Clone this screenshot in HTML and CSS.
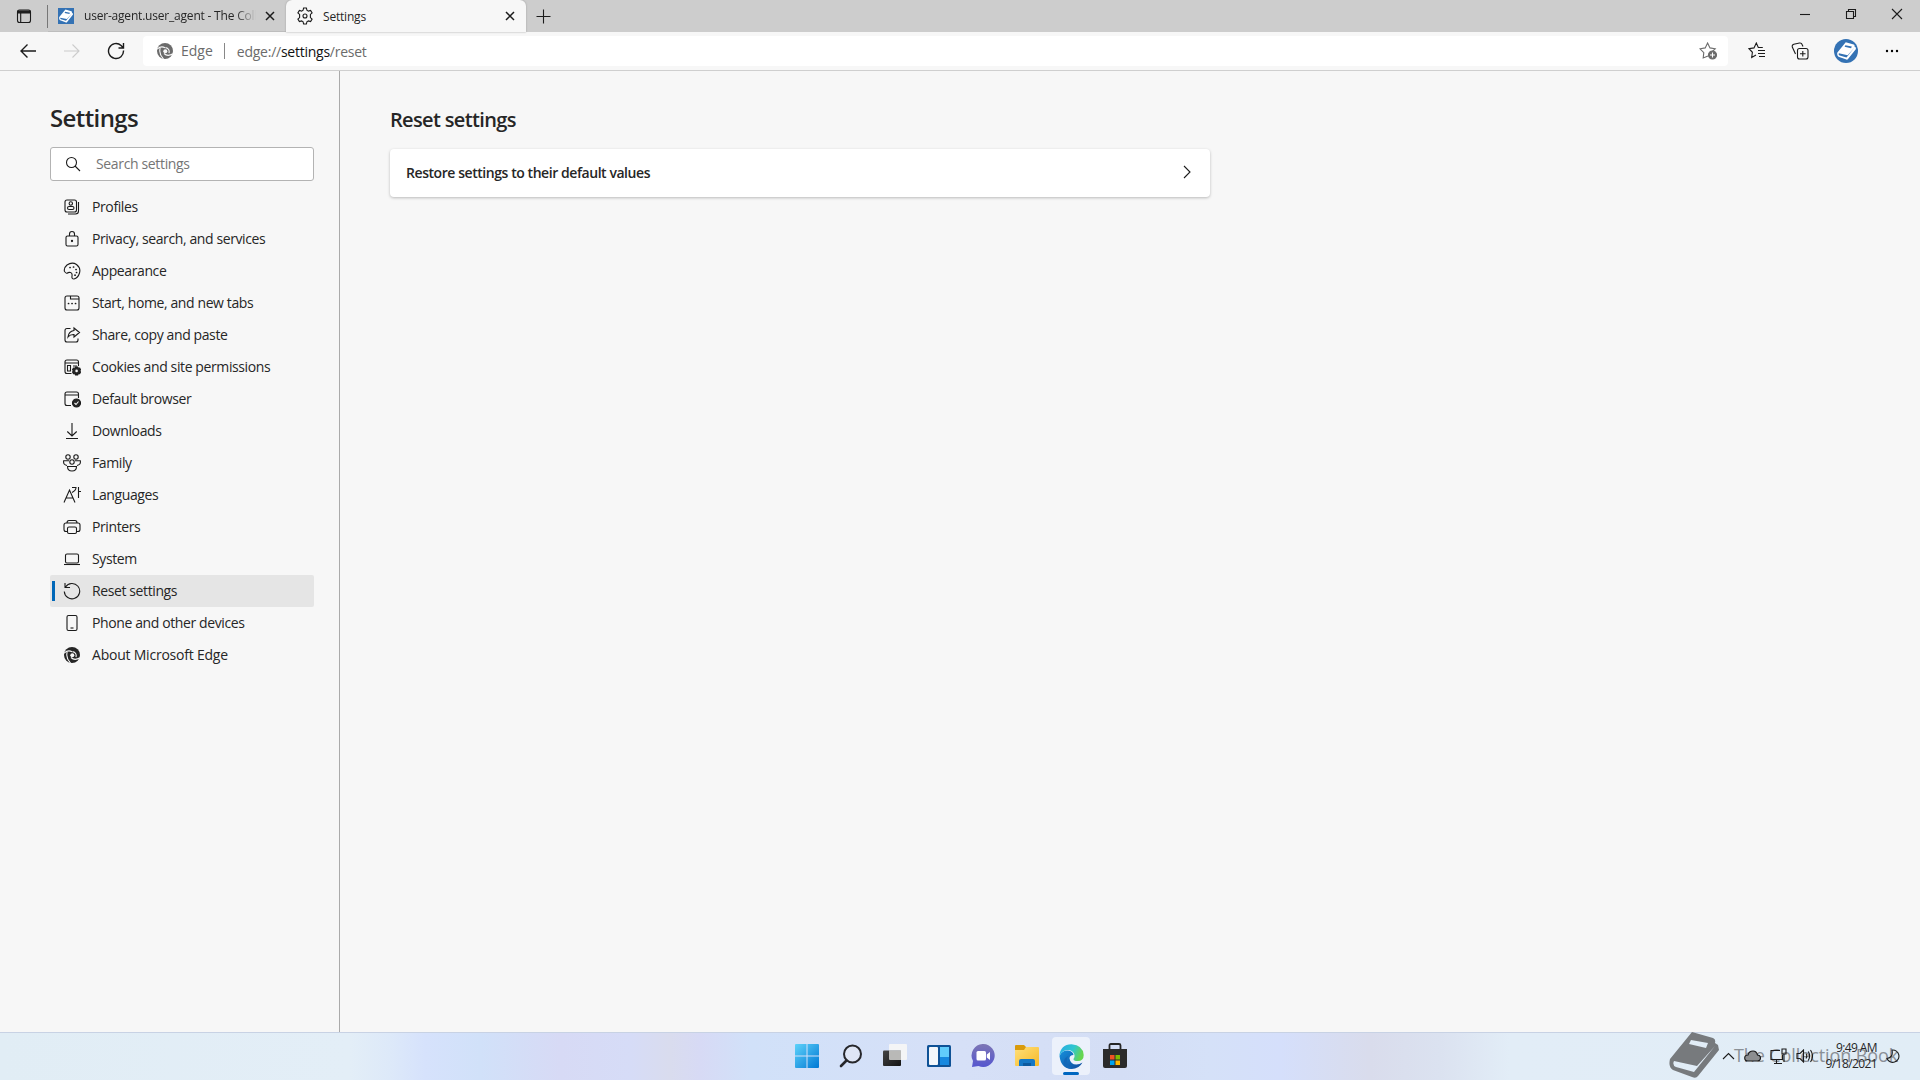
FILE: index.html
```html
<!DOCTYPE html>
<html lang="en">
<head>
    <meta charset="UTF-8">
    <title>Settings</title>
    <link rel="stylesheet" href="styles.css">
</head>
<body>

<!-- shared symbols -->
<svg class="symbols" width="0" height="0">
    <symbol id="book" viewBox="0 0 50 46">
        <path fill-rule="evenodd" d="M23 0 44 6Q47 7 46 11L49 13 50 18 29 44Q27 47 23 45L4 38Q-1 35 1 27ZM22 8 20 12 37 16 39 11ZM5 29Q3 33 7 35L25 40 46 14 28 34Z"/>
    </symbol>
    <symbol id="swirl" viewBox="0 0 16 16">
        <circle cx="8" cy="8" r="8"/>
        <path class="swirl-cut" d="M0 6.200Q4 2.500 8 4.800M3.200 5.200Q1.500 10.500 6.500 16M8.500 4.600Q13 5.500 12 10.200M16 10.800Q10.500 14 7 10.500"/>
        <circle class="swirl-hole" cx="8.300" cy="8.200" r="2"/>
    </symbol>
</svg>

<header class="tabbar">
    <div class="tab-actions">
        <svg class="icon" width="16" height="16" viewBox="0 0 16 16"><rect x="1.500" y="2" width="13" height="12.500" rx="2"/><path class="solid" d="M2 3h12v2H2z"/><path d="M4.700 5v9"/></svg>
    </div>
    <div class="tab">
        <span class="favicon"><svg width="14" height="14"><use href="#book"/></svg></span>
        <span class="tab-title faded">user-agent.user_agent - The Coll</span>
        <svg class="icon close" width="10" height="10" viewBox="0 0 10 10"><path d="M1 1l8 8M9 1l-8 8"/></svg>
    </div>
    <div class="tab active">
        <svg class="icon gear" width="18" height="18" viewBox="0 0 18 18"><path d="M7.600 1h2.800l.5 2.200 1.500.9 2.200-.7 1.500 2.500-1.700 1.500v3.200l1.700 1.500-1.500 2.500-2.200-.7-1.500.9-.5 2.200H7.600l-.5-2.200-1.500-.9-2.200.7-1.500-2.500 1.700-1.500V7.400L1.900 5.900l1.500-2.500 2.200.7 1.500-.9z"/><circle cx="9" cy="9" r="2"/></svg>
        <span class="tab-title">Settings</span>
        <svg class="icon close" width="10" height="10" viewBox="0 0 10 10"><path d="M1 1l8 8M9 1l-8 8"/></svg>
    </div>
    <svg class="icon new-tab" width="15" height="15" viewBox="0 0 15 15"><path d="M7.500.5v14M.5 7.500h14"/></svg>
    <div class="window-buttons">
        <svg class="icon" width="12" height="12" viewBox="0 0 12 12"><path d="M1 6.500h10"/></svg>
        <svg class="icon" width="12" height="12" viewBox="0 0 12 12"><path d="M1.500 3.500h7v7h-7zM3.500 3V1.500h7v7H9"/></svg>
        <svg class="icon" width="12" height="12" viewBox="0 0 12 12"><path d="M1 1l10 10M11 1L1 11"/></svg>
    </div>
</header>

<nav class="toolbar">
    <svg class="icon back" width="18" height="16" viewBox="0 0 18 16"><path d="M17 8H2M8.500 1.500L2 8l6.500 6.500"/></svg>
    <svg class="icon forward" width="18" height="16" viewBox="0 0 18 16"><path d="M1 8h15M9.500 1.500L16 8l-6.500 6.500"/></svg>
    <svg class="icon reload" width="18" height="18" viewBox="0 0 18 18"><path d="M16.500 8.500a7.500 7.500 0 1 1-2.400-5L16 5.500M16.500 1v5h-5"/></svg>
    <div class="address">
        <svg class="swirl" width="16" height="16"><use href="#swirl"/></svg>
        <span class="site">Edge</span>
        <span class="url">edge://<b>settings</b>/reset</span>
        <svg class="icon add-star" width="19" height="18" viewBox="0 0 19 18"><path d="M9 14l-4.800 2 .6-5.400L1 6.800l5.200-.9L8.600 1 11 5.900l5.200.9-2.600 2.400"/><circle cx="13.500" cy="13" r="4" class="solid"/><path class="plus" d="M13.500 10.500v5M11 13h5"/></svg>
    </div>
    <div class="tools">
        <svg class="icon" width="18" height="18" viewBox="0 0 18 18"><path d="M8 13l-4.300 2.500.7-5.200L1 6.700l5-.8L8.300 1l2 4.500h4.500M10 8.500h7M10 11.500h7M11 14.500h6"/></svg>
        <svg class="icon" width="18" height="18" viewBox="0 0 18 18"><rect x="6.500" y="6.500" width="10.500" height="10.500" rx="2"/><path d="M11.800 9v5.600M9 11.800h5.600M4.500 12L1.300 5Q.8 3 2.800 2.200L8.500 1q2-.3 2.600 1.500L12 4.500"/></svg>
        <span class="avatar"><svg width="19" height="18"><use href="#book"/></svg></span>
        <svg class="dots" width="14" height="4" viewBox="0 0 14 4"><circle cx="2" cy="2" r="1.200"/><circle cx="7" cy="2" r="1.200"/><circle cx="12" cy="2" r="1.200"/></svg>
    </div>
</nav>

<main>
    <aside>
        <h1>Settings</h1>
        <div class="search">
            <svg class="icon" width="16" height="16" viewBox="0 0 16 16"><circle cx="6.500" cy="6.500" r="5"/><path d="M10 10l5 5"/></svg>
            <span>Search settings</span>
        </div>
        <ul class="menu">
            <li><svg class="icon" width="18" height="18" viewBox="0 0 18 18"><rect x="2" y="2" width="11.500" height="12" rx="2"/><circle cx="7.800" cy="5.500" r="1.700"/><rect x="4.500" y="8.500" width="6.500" height="3" rx="1.500"/><path d="M15.500 4v9q0 3-3 3H5"/></svg><span>Profiles</span></li>
            <li><svg class="icon" width="18" height="18" viewBox="0 0 18 18"><rect x="3" y="6" width="12" height="10" rx="1.500"/><path d="M6.500 6V4q0-2.500 2.500-2.500T11.500 4v2"/><circle cx="9" cy="11" r=".6"/></svg><span>Privacy, search, and services</span></li>
            <li><svg class="icon" width="18" height="18" viewBox="0 0 18 18"><path d="M1.500 9.500Q.5 6 4 3q5-3.500 9.500-.5Q18 6 16.500 11T11 17q-2.500 0-2-3t-1.500-3.500-3 .5-3-1.500z"/><path class="dotted" d="M7 5.500h.1M10.500 5h.1M13 7.500h.1M13.500 10.500h.1M12 13.200h.1"/></svg><span>Appearance</span></li>
            <li><svg class="icon" width="18" height="18" viewBox="0 0 18 18"><rect x="2" y="2" width="14" height="14" rx="2"/><path d="M7.500 2v3H16"/><path class="dotted" d="M5.500 9.500h.1M9 9.500h.1M12.500 9.500h.1"/></svg><span>Start, home, and new tabs</span></li>
            <li><svg class="icon" width="18" height="18" viewBox="0 0 18 18"><path d="M7.500 2.500H4q-2 0-2 2V14q0 2 2 2h9q2 0 2-2v-1.500M11 2l5.500 4.500L11 11V8.500q-4-.2-6 2.500.5-5.500 6-6.500z"/></svg><span>Share, copy and paste</span></li>
            <li><svg class="icon" width="18" height="18" viewBox="0 0 18 18"><path d="M8.500 15.500H4q-2 0-2-2V4q0-2 2-2h9.500q2 0 2 2v4M2 5h13.500M4.500 7.500h3v5.500h-3zM10 8h4"/><path class="solid" d="M12.500 9h2.200l.5 1.200 1.500-.2.800 1.700-.8 1.200.8 1.200-.8 1.600-1.500-.1-.5 1.300h-2.200l-.6-1.300-1.500.1-.8-1.600.8-1.200-.8-1.200.8-1.700 1.500.2z"/><circle class="hole" cx="13.600" cy="12.900" r="1.300"/></svg><span>Cookies and site permissions</span></li>
            <li><svg class="icon" width="18" height="18" viewBox="0 0 18 18"><path d="M8 15.500H4q-2 0-2-2V4q0-2 2-2h9.500q2 0 2 2v4M2 5h13.500"/><circle class="solid" cx="13.500" cy="13" r="4"/><path class="cut" d="M11.500 13l1.500 1.500 2.500-3"/></svg><span>Default browser</span></li>
            <li><svg class="icon" width="18" height="18" viewBox="0 0 18 18"><path d="M9 1v13M4.300 9.500L9 14l4.700-4.500M3 16.500h12"/></svg><span>Downloads</span></li>
            <li><svg class="icon" width="18" height="18" viewBox="0 0 18 18"><circle cx="5" cy="3" r="2.200"/><circle cx="13" cy="3" r="2.200"/><circle cx="9" cy="8" r="2.200"/><path d="M6 6.700H.7Q0 11 4 11.500M12 6.700h5.300Q18 11 14 11.500M4.500 12.500h9Q13.500 17 9 17t-4.500-4.500z"/></svg><span>Family</span></li>
            <li><svg class="icon" width="18" height="18" viewBox="0 0 18 18"><path d="M1 16.500L6.500 4 12 16.500M3 12h7M9 1.500h4q0 3-4 5M15.500 1v11M15.500 5.500H18"/></svg><span>Languages</span></li>
            <li><svg class="icon" width="18" height="18" viewBox="0 0 18 18"><path d="M4.500 13.500H3q-2 0-2-2V7q0-2 2-2h12q2 0 2 2v4.500q0 2-2 2h-1.500M4 5q0-2.500 2-2.500h6q2 0 2 2.500"/><rect x="4.500" y="9" width="9" height="6.500" rx="1.500"/></svg><span>Printers</span></li>
            <li><svg class="icon" width="18" height="18" viewBox="0 0 18 18"><rect x="2.500" y="4" width="13" height="9" rx="1.500"/><path d="M1 14.500h16"/></svg><span>System</span></li>
            <li class="selected"><svg class="icon" width="18" height="18" viewBox="0 0 18 18"><path d="M2.500 5a7.700 7.700 0 1 1-1.200 4.500M2 1v4.500h5"/></svg><span>Reset settings</span></li>
            <li><svg class="icon" width="18" height="18" viewBox="0 0 18 18"><rect x="4" y="1.500" width="10" height="15" rx="1.500"/><path d="M7.500 14h3"/></svg><span>Phone and other devices</span></li>
            <li><svg class="swirl" width="16" height="16"><use href="#swirl"/></svg><span class="wide">About Microsoft Edge</span></li>
        </ul>
    </aside>
    <section>
        <h2>Reset settings</h2>
        <div class="card">
            <span>Restore settings to their default values</span>
            <svg class="icon" width="8" height="14" viewBox="0 0 8 14"><path d="M1 1l6 6-6 6"/></svg>
        </div>
    </section>
</main>

<footer class="taskbar">
    <div class="apps">
        <svg width="24" height="24" viewBox="0 0 24 24">
            <defs><linearGradient id="win" x2="1" y2="1" gradientUnits="userSpaceOnUse" x1="0" y1="0" gradientTransform="scale(24)"><stop stop-color="#5ed2fa"/><stop offset="1" stop-color="#0078d4"/></linearGradient></defs>
            <path fill="url(#win)" d="M1 0h10.500v11.500H0V1Q0 0 1 0zM12.500 0H23Q24 0 24 1v10.500H12.500zM0 12.500h11.500V24H1Q0 24 0 23zM12.500 12.500H24V23q0 1-1 1H12.500z"/>
        </svg>
        <svg width="24" height="24" viewBox="0 0 24 24"><circle cx="13.500" cy="10" r="8.500" fill="#dfe6f5" stroke="#26272b" stroke-width="2"/><path d="M7.500 16.500L2 22" stroke="#26272b" stroke-width="2.600" stroke-linecap="round"/></svg>
        <svg width="24" height="24" viewBox="0 0 24 24">
            <defs><linearGradient id="view" x2="1" y2="1"><stop stop-color="#444"/><stop offset="1" stop-color="#141414"/></linearGradient></defs>
            <rect y="6.500" width="18" height="15.500" rx="1" fill="url(#view)"/><path fill="#f4f5f6" d="M6 1q0-1 1-1h16q1 0 1 1v14q0 1-1 1h-5V6.500H6z"/><path fill="#b9b9b7" d="M6 6.500h12V16H7q-1 0-1-1z"/>
        </svg>
        <svg width="24" height="24" viewBox="0 0 24 24"><rect x="0" y="1" width="24" height="22" rx="1.500" fill="#0f5296"/><rect x="2" y="3" width="9" height="18" rx="1" fill="#f3f7fb"/><path fill="#61ccfb" d="M13 3h9v10h-9z"/><path fill="#1688df" d="M13 13h9v8h-9z"/></svg>
        <svg width="24" height="24" viewBox="0 0 24 24">
            <defs><linearGradient id="chat" x2="0" y2="1"><stop stop-color="#7d76b5"/><stop offset="1" stop-color="#5556cf"/></linearGradient></defs>
            <path fill="url(#chat)" d="M12.500 0A11.500 11.500 0 1 1 7.500 22L1 23 2 17A11.500 11.500 0 0 1 12.500 0z"/><rect x="5.500" y="7" width="9.500" height="9.500" rx="1.500" fill="#fff"/><path fill="#fff" d="M15.800 10.500L19 8v8l-3.200-2.500z"/>
        </svg>
        <svg width="24" height="24" viewBox="0 0 24 24">
            <defs><linearGradient id="folder" x2="1" y2="1"><stop stop-color="#ffe07a"/><stop offset="1" stop-color="#f7b928"/></linearGradient></defs>
            <path fill="#d99b0c" d="M1 1h8l2 2v6H0V2q0-1 1-1z"/><path fill="url(#folder)" d="M0 6h9l2-3h12q1 0 1 1v17q0 1-1 1H1q-1 0-1-1z"/><path fill="#1477c5" d="M4 22v-5q0-2 2-2h12q2 0 2 2v5z"/><path fill="#0c5a9e" d="M8 19h8v3H8z"/>
        </svg>
        <span class="running">
            <svg width="25" height="25" viewBox="0 0 25 25">
                <defs>
                    <linearGradient id="edgeTop" x1="0" x2="1" y2=".3"><stop stop-color="#28a9e3"/><stop offset=".6" stop-color="#2fc6d0"/><stop offset="1" stop-color="#65d650"/></linearGradient>
                    <linearGradient id="edgeLow" x2="1" y2="1"><stop stop-color="#1690dc"/><stop offset="1" stop-color="#104a9c"/></linearGradient>
                </defs>
                <path fill="url(#edgeLow)" d="M.5 12Q3 6 9 6.500q5 .5 5.500 4.500-4 0-4 3.500 1 6 7 6 3 0 6-2Q20 25 12.500 25 2 24.500.5 12z"/>
                <path fill="#1268b8" d="M9 12q-4 7 4.500 12.900Q1 24 6 14.500z"/>
                <path fill="url(#edgeTop)" d="M.3 12Q1.500.3 12.500.2 24 1 24.700 11q0 6-6 6-4.500 0-4.200-2 1.500-1.500 1-4Q14 6 8.500 6 3 6.500.3 12z"/>
            </svg>
        </span>
        <svg width="24" height="26" viewBox="0 0 24 26"><path d="M6.500 7V2.500q0-1.500 1.500-1.500h8q1.500 0 1.500 1.500V7" fill="none" stroke="#262626" stroke-width="1.800"/><path fill="#2b2b2b" d="M0 6h24v17q0 2-2 2H2q-2 0-2-2z"/><path fill="#f05124" d="M7 12h4.500v4.500H7z"/><path fill="#7fba00" d="M12.500 12H17v4.500h-4.500z"/><path fill="#00a4ef" d="M7 17.500h4.500V22H7z"/><path fill="#ffb900" d="M12.500 17.500H17V22h-4.500z"/></svg>
    </div>
    <div class="watermark">
        <svg width="50" height="46"><use href="#book"/></svg>
        <span>The Collection Book</span>
    </div>
    <div class="tray">
        <svg class="icon" width="13" height="8" viewBox="0 0 13 8"><path d="M1 7l5.500-5.500L12 7"/></svg>
        <svg class="icon cloud" width="17" height="12" viewBox="0 0 17 12"><path d="M4 11Q.7 11 .7 8T4 5q1-4 5-4 3.500 0 4.500 4 3 .3 3 3t-3 3z"/></svg>
        <svg class="icon" width="17" height="17" viewBox="0 0 17 17"><path d="M10 2.500H1v9h11.500V7M4 15.500h8M6.500 12v3M12 1h4v5h-4zM14 6v8"/></svg>
        <svg class="icon" width="17" height="14" viewBox="0 0 17 14"><path d="M1 4.500h3L7.500 1v12L4 9.500H1zM10 4.500q1.500 2.500 0 5M12.300 2.500q2.700 4.500 0 9M14.500 1q4 6 0 12"/></svg>
        <div class="clock"><span>9:49 AM</span><span>9/18/2021</span></div>
        <svg class="icon" width="14" height="14" viewBox="0 0 14 14"><path d="M6 1a6.200 6.200 0 1 1-5 8.500Q7.500 8.500 6 1z"/></svg>
    </div>
</footer>

</body>
</html>
```
FILE: styles.css
```css
* {
    box-sizing: border-box;
}
body {
    margin: 0;
    height: 1080px;
    display: flex;
    flex-direction: column;
    overflow: hidden;
    background-color: #f7f7f7;
    color: #262626;
    font-family: "Segoe UI", "Open Sans", "Noto Sans", sans-serif;
    font-size: 14px;
}
svg {
    flex: none;
    display: block;
}
.symbols {
    position: absolute;
}
.icon {
    fill: none;
    stroke: #1b1b1b;
    stroke-width: 1.1;
}
.icon .solid {
    fill: currentColor;
}
.icon .dotted {
    stroke-width: 1.7;
    stroke-linecap: round;
}
.icon .hole {
    fill: #f7f7f7;
    stroke: none;
}
.icon .cut {
    stroke: #f7f7f7;
}
.swirl {
    fill: currentColor;
}
.swirl-cut {
    fill: none;
    stroke: #f9f9f9;
    stroke-width: 1.1;
}
.swirl-hole {
    fill: #f9f9f9;
}

/* tabs */
.tabbar {
    height: 32px;
    display: flex;
    align-items: center;
    background-color: #cdcdcd;
    font-size: 12px;
}
.tab-actions {
    width: 48px;
    height: 23px;
    display: flex;
    align-items: center;
    padding-left: 16px;
    border-right: 1px solid #777;
}
.tab {
    width: 238px;
    height: 32px;
    display: flex;
    align-items: center;
    padding: 0 11px 0 10px;
    border-bottom: 1px solid #bdbdbd;
}
.tab.active {
    width: 240px;
    background-color: #f7f7f7;
    border: 0;
    border-radius: 6px 6px 0 0;
    box-shadow: 0 0 2px #999;
}
.favicon {
    width: 16px;
    height: 16px;
    display: flex;
    align-items: center;
    justify-content: center;
    background-color: #3472b4;
    fill: #fff;
}
.tab-title {
    margin-left: 10px;
    width: 172px;
    overflow: hidden;
    white-space: nowrap;
    letter-spacing: -0.2px;
}
.active .tab-title {
    margin-left: 9px;
}
.faded {
    -webkit-mask-image: linear-gradient(90deg, #000 88%, transparent);
}
.tab .close {
    margin-left: auto;
    stroke-width: 1.5;
}
.new-tab {
    margin-left: 10px;
}
.window-buttons {
    margin-left: auto;
    margin-right: 17px;
    margin-bottom: 4px;
    display: flex;
    gap: 34px;
}

/* toolbar */
.toolbar {
    height: 39px;
    display: flex;
    align-items: center;
    padding-left: 19px;
    border-bottom: 1px solid #cfcfcf;
}
.back, .reload {
    stroke-width: 1.4;
}
.forward {
    margin-left: 26px;
    stroke: #ccc;
}
.reload {
    margin-left: 26px;
}
.address {
    width: 1585px;
    height: 30px;
    margin-left: 18px;
    display: flex;
    align-items: center;
    padding: 0 10px 0 14px;
    background-color: #fff;
    border-radius: 4px;
    color: #6b6b6b;
}
.site {
    margin-left: 8px;
    padding-right: 11px;
    border-right: 1px solid #888;
    line-height: 16px;
}
.url {
    margin-left: 12px;
    letter-spacing: -0.25px;
}
.url b {
    color: #111;
    font-weight: normal;
}
.add-star {
    margin-left: auto;
    stroke: #6b6b6b;
}
.add-star .plus {
    stroke: #fff;
}
.tools {
    margin-left: 20px;
    display: flex;
    align-items: center;
    gap: 25px;
}
.avatar {
    width: 24px;
    height: 24px;
    display: flex;
    align-items: center;
    justify-content: center;
    background-color: #3472b4;
    border-radius: 50%;
    fill: #fff;
}
.dots {
    margin-left: 2px;
}

/* settings page */
main {
    flex: 1;
    display: flex;
}
aside {
    width: 340px;
    padding: 30px 25px 0 50px;
    border-right: 1px solid #aaa;
}
h1 {
    margin: 0;
    font-size: 24px;
    line-height: 34px;
    font-weight: 600;
    letter-spacing: -0.6px;
}
.search {
    height: 34px;
    margin-top: 12px;
    display: flex;
    align-items: center;
    padding-left: 14px;
    background-color: #fff;
    border: 1px solid #b3b3b3;
    border-radius: 3px;
    color: #757575;
}
.search span {
    margin-left: 15px;
    padding-bottom: 1px;
    letter-spacing: -0.35px;
}
.menu {
    margin: 10px 0 0;
    padding: 0;
    list-style: none;
}
.menu li {
    height: 32px;
    display: flex;
    align-items: center;
    padding-left: 13px;
    border-radius: 2px;
    letter-spacing: -0.39px;
}
.menu span {
    margin-left: 11px;
    padding-bottom: 2px;
}
.menu .wide {
    letter-spacing: -0.22px;
}
.menu .swirl {
    margin: 0 1px;
}
.menu .selected {
    position: relative;
    background-color: #e5e5e5;
}
.selected::before {
    content: "";
    position: absolute;
    left: 2px;
    top: 6px;
    width: 3px;
    height: 20px;
    background-color: #0067b8;
}
section {
    padding: 35px 0 0 50px;
}
h2 {
    margin: 0;
    font-size: 20px;
    line-height: 28px;
    font-weight: 600;
    letter-spacing: -0.65px;
}
.card {
    width: 820px;
    height: 48px;
    margin-top: 15px;
    display: flex;
    align-items: center;
    justify-content: space-between;
    padding: 0 19px 2px 16px;
    background-color: #fff;
    border-radius: 4px;
    box-shadow: 0 1px 3px rgba(0, 0, 0, 0.25);
    font-weight: 600;
    letter-spacing: -0.44px;
}

/* taskbar */
.taskbar {
    position: relative;
    height: 48px;
    border-top: 1px solid #c8d2e4;
    background: linear-gradient(90deg, #e1edf5 0, #e3eef7 350px, #dde9f9 390px, #d6e2fc 425px, #d1e1f9 480px, #d7daf5 560px, #d6dcf7 630px, #d9dcee 670px, #d7daf5 700px, #d1e1f9 750px, #d6e0f7 960px, #d4def5 1120px, #d5e1f8 1210px, #d5dffb 1280px, #d9dcec 1370px, #dbe2f0 1440px, #e2edf7 1510px, #e1edf6 1920px);
}
.apps {
    height: 46px;
    margin-left: 795px;
    display: flex;
    align-items: center;
    gap: 20px;
}
.running {
    position: relative;
    width: 38px;
    height: 38px;
    margin: 0 -7px;
    display: flex;
    align-items: center;
    justify-content: center;
    background-color: #ecf1fb;
    border-radius: 4px;
}
.running::after {
    content: "";
    position: absolute;
    left: 11px;
    bottom: 0;
    width: 16px;
    height: 3px;
    background-color: #0067c0;
    border-radius: 2px;
}
.tray {
    position: absolute;
    right: 20px;
    top: 0;
    height: 46px;
    display: flex;
    align-items: center;
    gap: 9px;
}
.cloud {
    fill: #8c8e90;
}
.clock {
    margin-left: 4px;
    display: flex;
    flex-direction: column;
    align-items: flex-end;
    font-size: 12px;
    line-height: 16px;
    letter-spacing: -0.6px;
}
.watermark {
    position: absolute;
    left: 1669px;
    top: -1px;
    display: flex;
    align-items: center;
    gap: 15px;
    color: #8a9096;
    fill: #777a7d;
    font-size: 18px;
    letter-spacing: -0.1px;
}
```
